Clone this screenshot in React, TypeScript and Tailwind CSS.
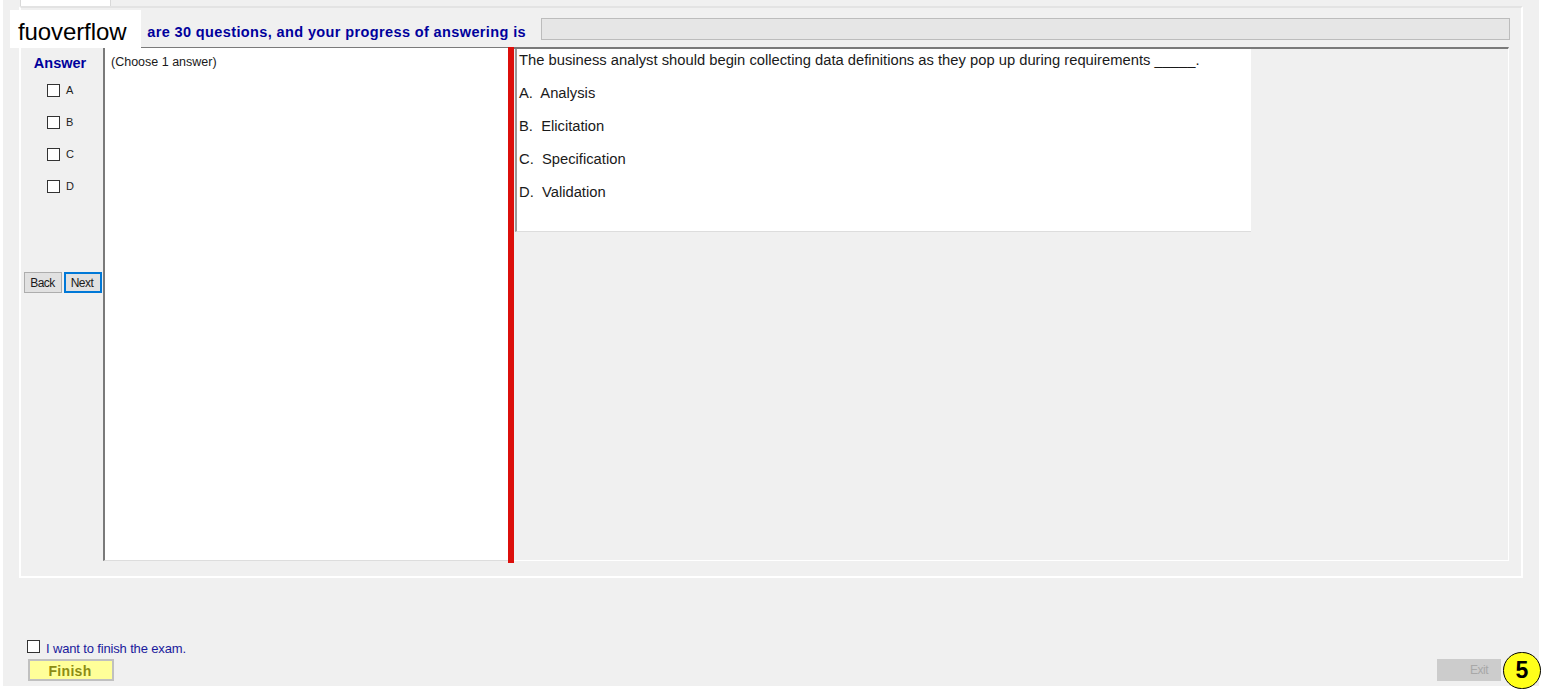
const FONT = "font-['Liberation_Sans',Arial,sans-serif]";

const OPTIONS = ["A", "B", "C", "D"];
const ANSWERS = [
  ["A.", "Analysis"],
  ["B.", "Elicitation"],
  ["C.", "Specification"],
  ["D.", "Validation"],
];

export default function App() {
  return (
    <div className={`relative w-[1542px] h-[690px] overflow-hidden bg-white ${FONT}`}>
      {/* Exam window */}
      <div className="ml-[3px] w-[1536px] h-[686px] bg-[#f0f0f0] flex flex-col">
        {/* Tab */}
        <div className="ml-[17px] w-[91px] h-[6px] bg-white border-x border-[#d9d9d9]" />

        {/* Tab panel */}
        <div className="ml-[16px] w-[1504px] h-[572px] shrink-0 border-2 border-white border-t-[#e3e3e3] pl-[1px] pr-[11px] pt-[10px] flex flex-col">
          <ProgressRow />
          <div className="mt-[7px] h-[516px] flex">
            <AnswerColumn />
            <div className="w-[405px] h-[514px] border-l-2 border-t border-[#7a7a7a] border-b border-b-[#dddddd] bg-white pl-[6px] pt-[6px] text-[12.5px] leading-[16px] text-[#1a1a1a]">
              (Choose 1 answer)
            </div>
            <div className="w-[6px] bg-[#dc0f0b]" />
            <QuestionPane />
          </div>
        </div>

        <FooterRow />
      </div>

      {/* Watermark */}
      <div className="absolute left-[10px] top-[10px] w-[131px] h-[38px] bg-white pl-[8px] text-[24px] leading-[44px] tracking-[-0.1px] text-black">
        fuoverflow
      </div>

      {/* Page number badge */}
      <div className="absolute left-[1503px] top-[652px] w-[38px] h-[37px] rounded-full border border-black bg-[#ffff1a] flex items-center justify-center text-[23px] font-bold text-black">
        5
      </div>
    </div>
  );
}

function ProgressRow() {
  return (
    <div className="h-[22px] flex items-center">
      <div className="w-[519px] h-full flex items-center justify-end pr-[15px]">
        <span className="pt-[8px] text-[14.5px] font-bold tracking-[0.38px] text-[#00009c] whitespace-nowrap">
          are 30 questions, and your progress of answering is
        </span>
      </div>
      <div className="w-[969px] h-full bg-[#e6e6e6] border border-[#bcbcbc]" />
    </div>
  );
}

function AnswerColumn() {
  return (
    <div className="w-[81px] flex flex-col items-center">
      <div className="mt-[8px] h-[16px] ml-[-5px] text-[14.5px] leading-[16px] font-bold text-[#00009c]">
        Answer
      </div>
      <div className="mt-[12px] flex flex-col gap-[18px] ml-[-4px]">
        {OPTIONS.map((option) => (
          <div key={option} className="flex h-[14px] items-start">
            <div className="mt-[1px] w-[13px] h-[13px] bg-white border border-[#333333]" />
            <span className="ml-[6px] text-[11px] leading-[14px] text-[#222222]">{option}</span>
          </div>
        ))}
      </div>
      <div className="mt-[79px] ml-[1px] flex gap-[2px]">
        <button className="w-[38px] h-[21px] pr-[1px] bg-[#e1e1e1] border border-[#adadad] text-[12px] tracking-[-0.5px] text-[#1a1a1a]">
          Back
        </button>
        <button className="w-[38px] h-[21px] pr-[2px] bg-[#e1e1e1] border-2 border-[#0078d7] text-[12px] tracking-[-0.5px] text-[#1a1a1a]">
          Next
        </button>
      </div>
    </div>
  );
}

function QuestionPane() {
  return (
    <div className="w-[995px] h-[514px] border-t-2 border-[#7a7a7a] border-r border-r-white border-b border-b-white">
      <div className="w-[736px] h-[183px] ml-[1px] bg-white border-l-2 border-[#9a9a9a] border-b border-b-[#dddddd] pl-[2px] pt-[2px] text-[14.75px] text-[#1a1a1a]">
        <p className="h-[19px] leading-[19px] whitespace-nowrap">
          The business analyst should begin collecting data definitions as they pop up during requirements _____.
        </p>
        <div className="mt-[14px] flex flex-col gap-[14px]">
          {ANSWERS.map(([letter, text]) => (
            <p key={letter} className="h-[19px] leading-[19px] whitespace-nowrap">
              {letter}&nbsp; {text}
            </p>
          ))}
        </div>
      </div>
    </div>
  );
}

function FooterRow() {
  return (
    <div className="flex-1 pl-[24px] pr-[38px] pt-[62px] flex justify-between items-end pb-[5px]">
      <div className="flex flex-col">
        <div className="flex items-start">
          <div className="w-[13px] h-[13px] bg-white border border-[#333333]" />
          <span className="ml-[6px] mt-[1px] text-[13px] leading-[16px] tracking-[-0.15px] text-[#1a1a9c]">
            I want to finish the exam.
          </span>
        </div>
        <button className="mt-[2px] ml-[1px] w-[86px] h-[22px] pr-[2px] bg-[#ffff99] border-2 border-[#c0c0c0] text-[14px] font-bold tracking-[0.3px] text-[#8c8c14]">
          Finish
        </button>
      </div>
      <button className="w-[64px] h-[22px] pl-[20px] bg-[#cccccc] text-[12px] tracking-[-0.5px] text-[#a8a8a8]">
        Exit
      </button>
    </div>
  );
}
